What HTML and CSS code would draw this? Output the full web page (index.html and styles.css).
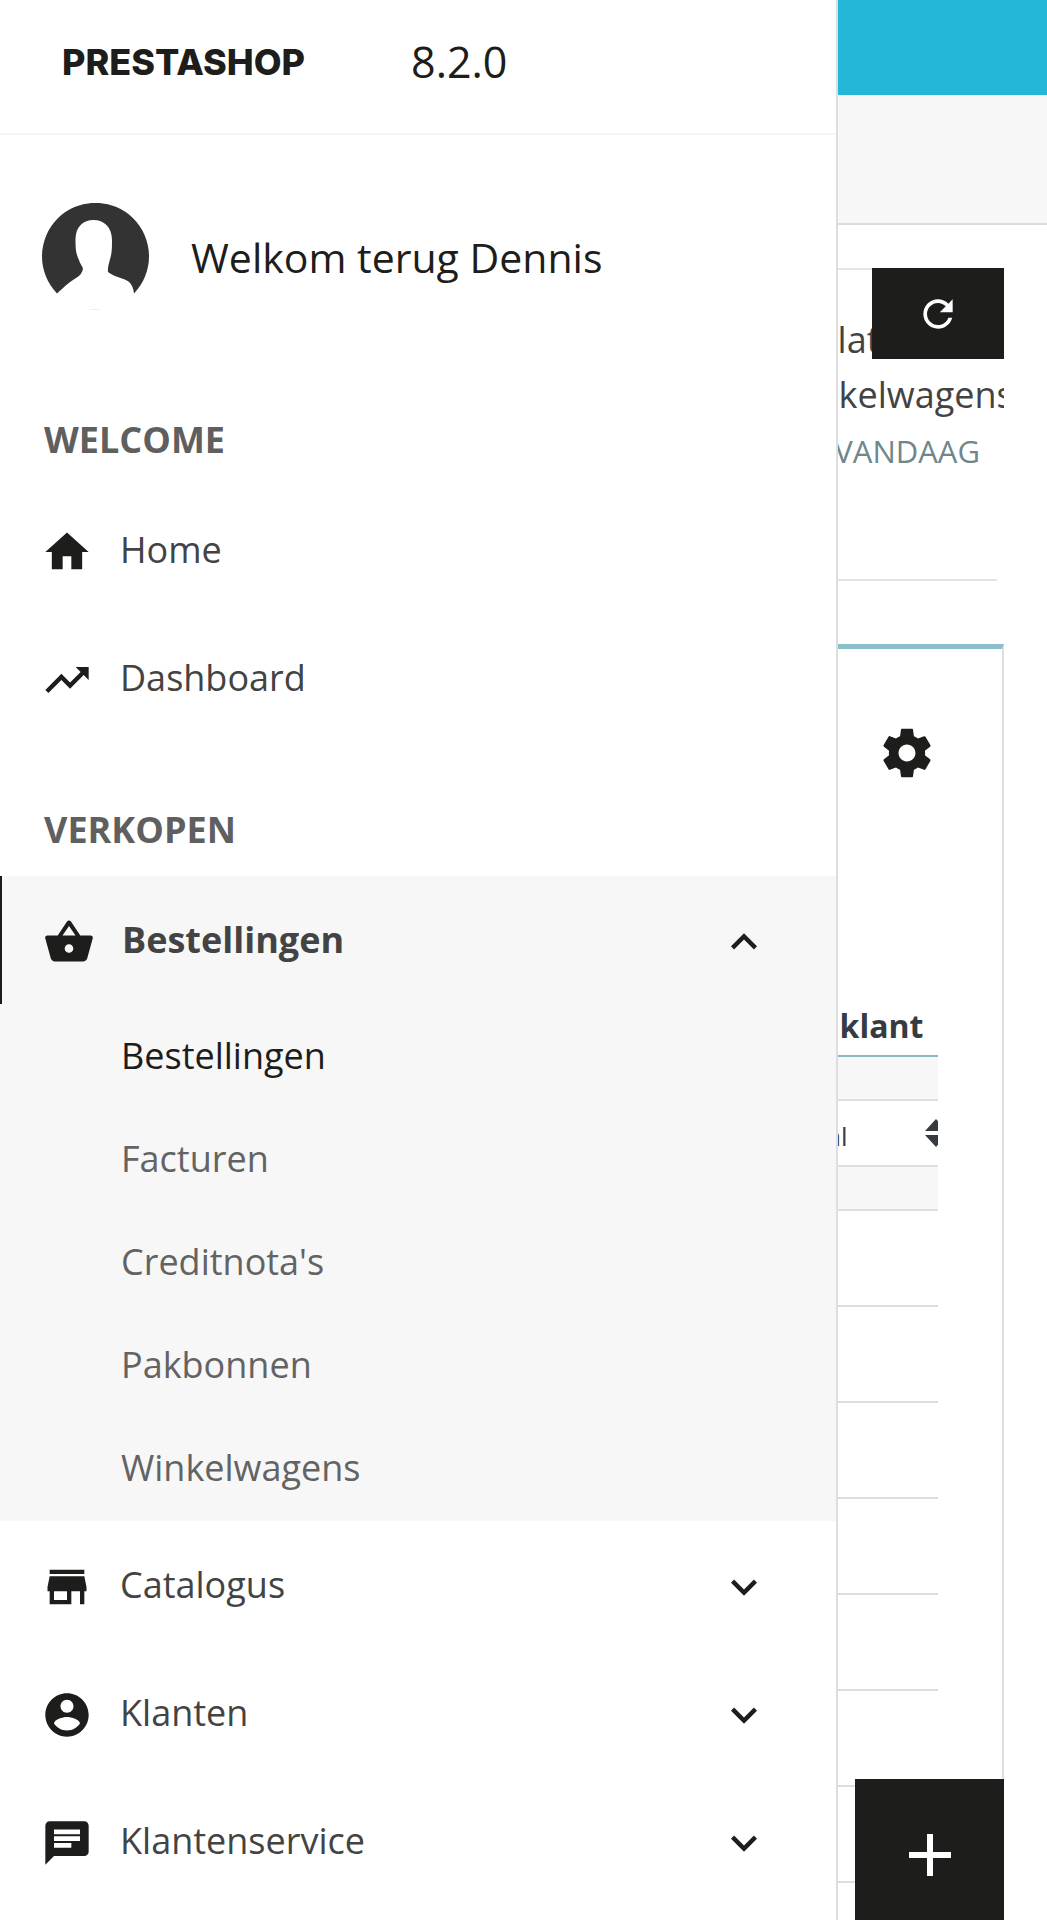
FILE: index.html
```html
<!DOCTYPE html>
<html lang="nl">
<head>
    <meta charset="UTF-8">
    <meta name="viewport" content="width=device-width, initial-scale=1.0">
    <title>PrestaShop</title>
    <link rel="stylesheet" href="styles.css">
</head>
<body>
  <div class="page">
    <aside class="sidebar">
      <header class="sidebar-header">
        <span class="logo">PRESTASHOP</span>
        <span class="version">8.2.0</span>
      </header>

      <div class="user">
        <svg class="avatar" viewBox="0 0 107 107" aria-hidden="true">
          <path fill="#333" d="M15 90.500A53.500 53.500 0 1 1 92 90.500C91 80 86 77.500 80 75.500C74 73.500 69 71.500 66 69C65.500 64 67 61 68 56C70 51 70 44 70 37C70 24 62 17 51.500 17C41 17 33 24 33.500 38C33.500 46 34 51 37 57C38 61 41 64 41 66C40 70 38 73 34 75C27 79 20 86 15 90.500Z"/>
          <path fill="#eee" d="M45 106h16q-8 2-16 0z"/>
        </svg>
        <span class="user-name">Welkom terug Dennis</span>
      </div>

      <nav>
        <h2 class="nav-title">WELCOME</h2>
        <ul class="nav-list">
          <li>
            <a class="nav-link" href="#">
              <svg class="icon" viewBox="0 0 24 24" aria-hidden="true"><path d="M10 20v-6h4v6h5v-8h3L12 3 2 12h3v8z"/></svg>
              <span>Home</span>
            </a>
          </li>
          <li>
            <a class="nav-link" href="#">
              <svg class="icon" viewBox="0 0 24 24" aria-hidden="true"><path d="M16 6l2.290 2.290-4.880 4.880-4-4L2 16.590 3.410 18l6-6 4 4 6.300-6.290L22 12V6z"/></svg>
              <span>Dashboard</span>
            </a>
          </li>
        </ul>

        <h2 class="nav-title">VERKOPEN</h2>
        <ul class="nav-list">
          <li class="open">
            <a class="nav-link active" href="#">
              <svg class="icon" viewBox="0 0 24 24" aria-hidden="true"><path d="M17.210 9l-4.380-6.560c-.19-.28-.51-.42-.83-.42-.32 0-.64.14-.83.430L6.790 9H2c-.55 0-1 .45-1 1 0 .09.010.18.040.270l2.540 9.270c.23.840 1 1.460 1.920 1.460h13c.92 0 1.690-.62 1.930-1.460l2.540-9.270L23 10c0-.55-.45-1-1-1h-4.790zM9 9l3-4.400L15 9H9zm3 8c-1.100 0-2-.9-2-2s.9-2 2-2 2 .9 2 2-.9 2-2 2z"/></svg>
              <span>Bestellingen</span>
              <svg class="icon arrow" viewBox="0 0 24 24" aria-hidden="true"><path d="M12 8l-6 6 1.410 1.410L12 10.830l4.590 4.580L18 14z"/></svg>
            </a>
            <ul class="submenu">
              <li><a class="current" href="#">Bestellingen</a></li>
              <li><a href="#">Facturen</a></li>
              <li><a href="#">Creditnota's</a></li>
              <li><a href="#">Pakbonnen</a></li>
              <li><a href="#">Winkelwagens</a></li>
            </ul>
          </li>
          <li>
            <a class="nav-link" href="#">
              <svg class="icon" viewBox="0 0 24 24" aria-hidden="true"><path d="M20 4H4v2h16V4zm1 10v-2l-1-5H4l-1 5v2h1v6h10v-6h4v6h2v-6h1zm-9 4H6v-4h6v4z"/></svg>
              <span>Catalogus</span>
              <svg class="icon arrow" viewBox="0 0 24 24" aria-hidden="true"><path d="M16.590 8.590L12 13.170 7.410 8.590 6 10l6 6 6-6z"/></svg>
            </a>
          </li>
          <li>
            <a class="nav-link" href="#">
              <svg class="icon" viewBox="0 0 24 24" aria-hidden="true"><path d="M12 2C6.480 2 2 6.480 2 12s4.480 10 10 10 10-4.480 10-10S17.520 2 12 2zm0 3c1.660 0 3 1.340 3 3s-1.340 3-3 3-3-1.340-3-3 1.340-3 3-3zm0 14.200c-2.500 0-4.710-1.280-6-3.220.03-1.990 4-3.080 6-3.080 1.990 0 5.970 1.090 6 3.080-1.290 1.940-3.500 3.220-6 3.220z"/></svg>
              <span>Klanten</span>
              <svg class="icon arrow" viewBox="0 0 24 24" aria-hidden="true"><path d="M16.590 8.590L12 13.170 7.410 8.590 6 10l6 6 6-6z"/></svg>
            </a>
          </li>
          <li>
            <a class="nav-link" href="#">
              <svg class="icon" viewBox="0 0 24 24" aria-hidden="true"><path d="M20 2H4c-1.100 0-1.990.9-1.990 2L2 22l4-4h14c1.100 0 2-.9 2-2V4c0-1.100-.9-2-2-2zM6 5.800h12v2.200H6zM14 14.200H6v-2.200h8zM18 11.100H6v-2.200h12z"/></svg>
              <span>Klantenservice</span>
              <svg class="icon arrow" viewBox="0 0 24 24" aria-hidden="true"><path d="M16.590 8.590L12 13.170 7.410 8.590 6 10l6 6 6-6z"/></svg>
            </a>
          </li>
        </ul>
      </nav>
    </aside>

    <main class="content">
      <div class="topbar"></div>
      <div class="toolbar"></div>

      <section class="stats">
        <div class="stats-box">
          <p class="stat">lat</p>
          <p class="stat stat-indent">kelwagens</p>
          <p class="stat-period">VANDAAG</p>
        </div>
        <button class="refresh" type="button" aria-label="Vernieuwen">
          <svg viewBox="0 0 24 24" aria-hidden="true"><path d="M17.650 6.350C16.200 4.900 14.210 4 12 4c-4.420 0-7.990 3.580-7.990 8s3.570 8 7.990 8c3.730 0 6.840-2.550 7.730-6h-2.080c-.82 2.330-3.040 4-5.650 4-3.310 0-6-2.690-6-6s2.690-6 6-6c1.660 0 3.140.69 4.220 1.780L13 11h7V4l-2.350 2.350z"/></svg>
        </button>
      </section>

      <section class="panel">
        <div class="panel-tools">
          <button class="settings" type="button" aria-label="Instellingen">
            <svg viewBox="0 0 24 24" aria-hidden="true"><path d="M19.430 12.980c.04-.32.070-.64.070-.98s-.03-.66-.07-.98l2.110-1.650c.19-.15.240-.42.120-.64l-2-3.460c-.12-.22-.39-.3-.61-.22l-2.490 1c-.52-.4-1.080-.73-1.690-.98l-.38-2.650C14.460 2.180 14.250 2 14 2h-4c-.25 0-.46.180-.49.420l-.38 2.650c-.61.250-1.170.590-1.690.980l-2.490-1c-.23-.09-.49 0-.61.220l-2 3.460c-.13.220-.07.490.120.640l2.110 1.650c-.04.320-.07.650-.07.980s.03.660.070.980l-2.110 1.650c-.19.150-.24.420-.12.640l2 3.460c.12.220.39.300.610.220l2.490-1c.52.400 1.080.730 1.690.980l.38 2.650c.03.240.24.420.490.420h4c.25 0 .46-.18.490-.42l.38-2.650c.61-.25 1.170-.59 1.690-.98l2.490 1c.23.090.49 0 .61-.22l2-3.460c.12-.22.070-.49-.12-.64l-2.110-1.650zM12 15.500c-1.930 0-3.500-1.570-3.500-3.500s1.570-3.500 3.500-3.500 3.500 1.570 3.500 3.500-1.570 3.500-3.500 3.500z"/></svg>
          </button>
        </div>

        <table class="orders">
          <thead>
            <tr><th>klant</th></tr>
            <tr class="spacer"><td></td></tr>
            <tr class="filter">
              <td>
                <div class="filter-box">
                  <select class="filter-select" aria-label="Filter">
                    <option>al</option>
                  </select>
                  <svg class="sort" viewBox="0 0 22 28" aria-hidden="true"><path d="M11 0L22 12H0zM0 16h22L11 28z"/></svg>
                </div>
              </td>
            </tr>
            <tr class="spacer"><td></td></tr>
          </thead>
          <tbody>
            <tr><td></td></tr>
            <tr><td></td></tr>
            <tr><td></td></tr>
            <tr><td></td></tr>
            <tr><td></td></tr>
            <tr><td></td></tr>
            <tr><td></td></tr>
          </tbody>
        </table>
      </section>
    </main>

    <button class="add" type="button" aria-label="Toevoegen">
      <svg viewBox="0 0 42 42" aria-hidden="true"><path d="M18 0h6v18h18v6H24v18h-6V24H0v-6h18z"/></svg>
    </button>
  </div>
</body>
</html>
```
FILE: styles.css
```css
* {
  box-sizing: border-box;
}

body {
  margin: 0;
  background: #fff;
  color: #434343;
  font-family: "Open Sans", "Noto Sans", sans-serif;
  font-size: 36px;
}

ul, h2, p {
  margin: 0;
  padding: 0;
  list-style: none;
}

a {
  color: inherit;
  text-decoration: none;
}

button {
  border: 0;
  padding: 0;
  cursor: pointer;
}

.page {
  display: grid;
  grid-template-columns: 80% 1fr;
  height: 100vh;
  min-height: 1000px;
  overflow: hidden;
}

/* sidebar */
.sidebar {
  border-right: 2px solid #dedede;
}

.sidebar-header {
  display: flex;
  align-items: center;
  gap: 106px;
  height: 135px;
  padding: 0 62px 9px;
  border-bottom: 2px solid #f6f6f6;
  color: #1d1d1b;
}

.logo {
  font-family: Inter, sans-serif;
  font-size: 36px;
  font-weight: 800;
}

.version {
  font-size: 43px;
  line-height: 56px;
}

.user {
  display: flex;
  align-items: center;
  gap: 42px;
  padding: 68px 42px 42px;
  color: #1d1d1b;
}

.avatar {
  width: 107px;
  height: 107px;
}

.user-name {
  font-size: 41px;
  line-height: 54px;
}

.nav-title {
  padding: 66px 44px 24px;
  color: #5f5f5f;
  font-size: 36px;
  line-height: 44px;
}

.nav-link {
  display: flex;
  align-items: center;
  gap: 27px;
  height: 128px;
  padding: 0 66px 0 41px;
}

.nav-link span {
  padding-bottom: 2px;
}

.icon {
  width: 52px;
  height: 52px;
  margin-top: 3px;
  fill: #1d1d1b;
}

.arrow {
  margin-left: auto;
}

.open {
  background: #f7f7f7;
}

.active {
  border-left: 2px solid #1d1d1b;
  font-weight: bold;
}

.submenu {
  padding-bottom: 2px;
  color: #636363;
}

.submenu a {
  display: block;
  padding-left: 121px;
  line-height: 103px;
}

.submenu .current {
  color: #1d1d1b;
}

/* content */
.content {
  display: flex;
  flex-direction: column;
  min-width: 0;
  overflow: hidden;
}

.content > * {
  flex-shrink: 0;
}

.topbar {
  height: 95px;
  background: #25b7d8;
}

.toolbar {
  height: 130px;
  background: #f7f7f7;
  border-bottom: 2px solid #dcdcdc;
}

.stats {
  position: relative;
  margin: 43px 43px 0 0;
  overflow: hidden;
}

.stats-box {
  height: 313px;
  margin-right: 7px;
  padding-top: 42px;
  border-top: 2px solid #e3e6e7;
  border-bottom: 2px solid #dfe3e4;
}

.stat {
  line-height: 55px;
  white-space: nowrap;
}

.stat-indent {
  padding-left: 1px;
}

.stat-period {
  display: flex;
  justify-content: flex-end;
  padding-right: 17px;
  overflow: hidden;
  color: #6f868b;
  font-size: 31px;
  line-height: 58px;
}

.refresh {
  position: absolute;
  top: 0;
  right: 0;
  display: flex;
  align-items: center;
  justify-content: center;
  width: 132px;
  height: 91px;
  background: #1d1d1b;
}

.refresh svg {
  width: 44px;
  height: 44px;
  fill: #fff;
}

.panel {
  flex: 1 0 auto;
  margin: 63px 43px 0 0;
  border-top: 5px solid #8bc0cb;
  border-right: 2px solid #dedede;
}

.panel-tools {
  display: flex;
  justify-content: flex-end;
  padding: 75px 66px 0 0;
}

.settings {
  display: flex;
  background: none;
}

.settings svg {
  width: 58px;
  height: 58px;
  fill: #1d1d1b;
}

.orders {
  width: calc(100% - 64px);
  margin-top: 220px;
  border-collapse: collapse;
  table-layout: fixed;
}

.orders th {
  height: 54px;
  padding: 0 0 5px 2px;
  border-bottom: 2px solid #8fb9c1;
  color: #363a41;
  font-size: 32px;
  line-height: 44px;
  text-align: left;
}

.orders td {
  height: 96px;
  padding: 0;
  border-bottom: 2px solid #dedede;
}

.orders .spacer td {
  height: 44px;
  background: #f7f7f7;
}

.orders .filter td {
  height: 66px;
}

.filter-box {
  position: relative;
  height: 64px;
  overflow: hidden;
}

.filter-select {
  width: 130px;
  height: 64px;
  margin-left: -11px;
  padding: 6px 0 0;
  appearance: none;
  border: 0;
  background: #fff;
  color: #363a41;
  font: 26px "Open Sans", sans-serif;
}

.sort {
  position: absolute;
  top: 18px;
  right: -9px;
  width: 22px;
  fill: #363a41;
  pointer-events: none;
}

/* floating button, sits over the panel */
.add {
  position: fixed;
  right: 43px;
  bottom: 0;
  display: flex;
  align-items: flex-start;
  justify-content: center;
  width: 149px;
  height: 141px;
  padding-top: 55px;
  background: #1d1d1b;
}

.add svg {
  width: 42px;
  height: 42px;
  fill: #fff;
}
```
